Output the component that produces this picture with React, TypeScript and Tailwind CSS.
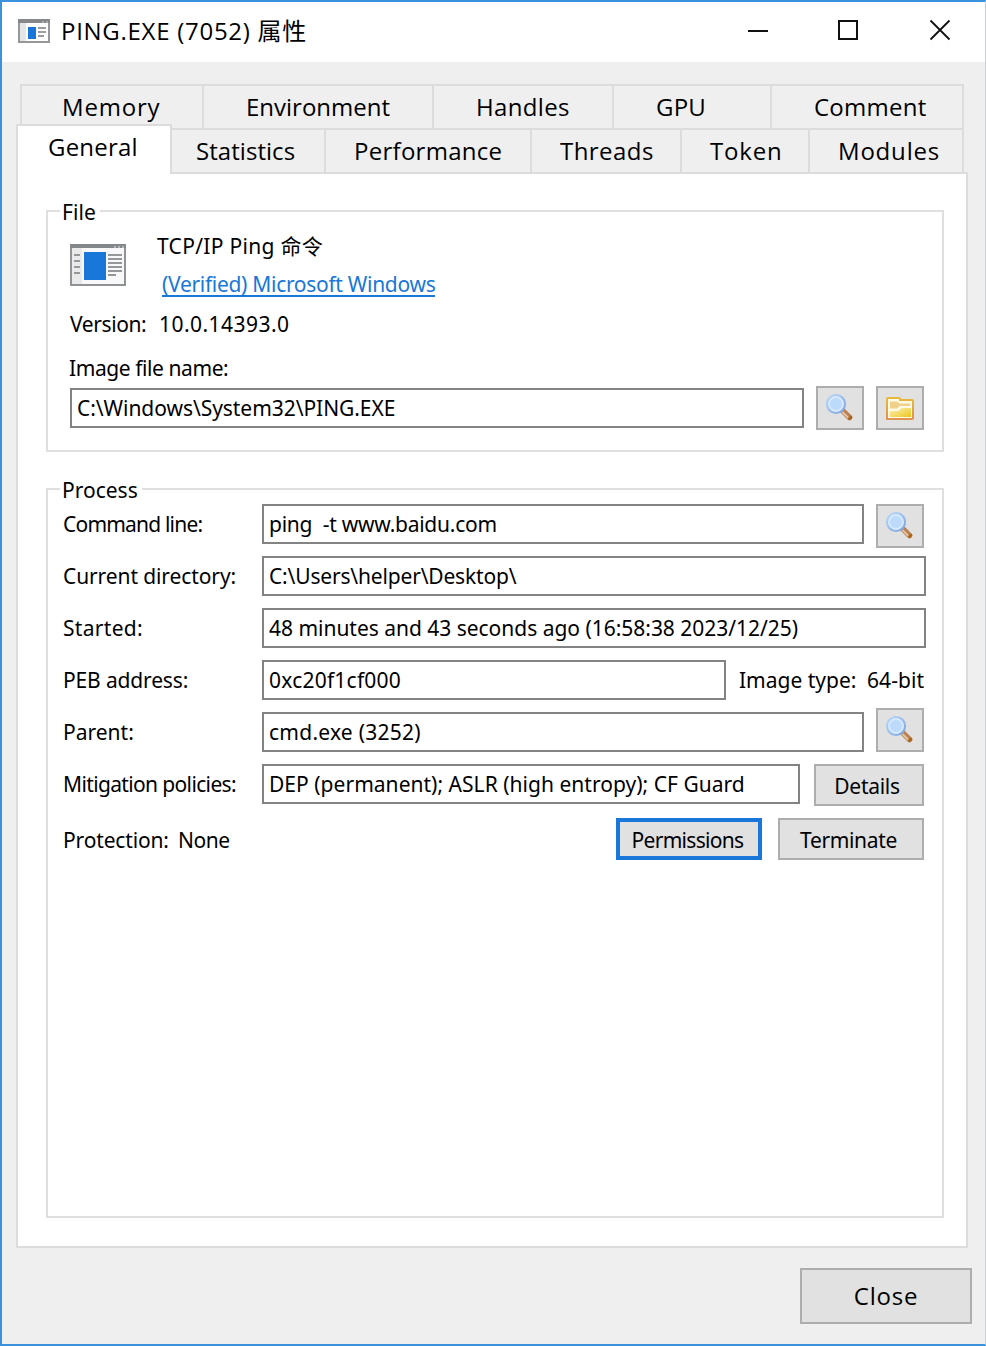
import React from 'react';

function Tab({ className, children }: { className: string; children: string }) {
  return (
    <div className={`flex h-full shrink-0 items-center border-r-2 border-[#dcdcdc] text-[24px] leading-none whitespace-pre ${className}`}>
      {children}
    </div>
  );
}

function Label({ className, children }: { className: string; children: string }) {
  return <span className={`shrink-0 whitespace-pre leading-none ${className}`}>{children}</span>;
}

function Field({ className, children }: { className: string; children: string }) {
  return (
    <div className={`flex h-[40px] shrink-0 items-center border-2 border-[#838383] bg-white pl-[5px] leading-none whitespace-pre ${className}`}>
      {children}
    </div>
  );
}

function Button({ className, children }: { className: string; children: React.ReactNode }) {
  return (
    <button className={`flex shrink-0 items-center justify-center bg-[#e1e1e1] leading-none whitespace-pre ${className}`}>
      {children}
    </button>
  );
}

function Magnifier() {
  return (
    <svg width="30" height="30" viewBox="0 0 30 30" className="-translate-x-px -translate-y-px">
      <defs>
        <linearGradient id="rim" x1="0" y1="0" x2="1" y2="1">
          <stop offset="0" stopColor="#bcd8f6" />
          <stop offset="1" stopColor="#7ba3de" />
        </linearGradient>
      </defs>
      <path d="M19.500 19.500L25.500 25.500" stroke="#b98250" strokeWidth="5.600" strokeLinecap="round" />
      <path d="M19 20.500L24.500 26" stroke="#e3c3a3" strokeWidth="1.800" strokeLinecap="round" />
      <path d="M25.500 26.500L26.800 25.200" stroke="#a9661c" strokeWidth="3" strokeLinecap="round" />
      <circle cx="12" cy="12" r="9" fill="#b9dafa" stroke="url(#rim)" strokeWidth="2.200" />
      <circle cx="12" cy="12" r="7" fill="#bcdbfa" stroke="#d6e8fc" strokeWidth="1.800" />
    </svg>
  );
}

function Folder() {
  return (
    <svg width="30" height="26" viewBox="0 0 30 26">
      <defs>
        <linearGradient id="edge" x1="0" y1="0" x2="0" y2="1">
          <stop offset="0" stopColor="#e8b93c" />
          <stop offset="1" stopColor="#df9350" />
        </linearGradient>
        <linearGradient id="face" x1="0" y1="0" x2="1" y2="1">
          <stop offset="0" stopColor="#fbf3b8" />
          <stop offset="1" stopColor="#edc61c" />
        </linearGradient>
      </defs>
      <path d="M2 24V4Q2 3 3 3H14Q15 3 15 4V5H27Q28 5 28 6V23Q28 24 27 24Z" fill="#fffbe6" stroke="url(#edge)" strokeWidth="2" />
      <path d="M5 6.500H12L14.500 8.500H25V11H14.500L12.500 13.500H5Z" fill="#f0d08a" />
      <path d="M4.500 22V16H13.500L16.500 13H26V22Z" fill="url(#face)" />
    </svg>
  );
}

function SmallAppIcon() {
  return (
    <svg width="32" height="24" viewBox="0 0 32 24" className="-mt-[2px] shrink-0">
      <rect x="1" y="1" width="30" height="22" fill="#fff" stroke="#94989b" strokeWidth="2" />
      <rect x="2" y="4" width="6" height="18" fill="#e4e5e6" />
      <rect x="0" y="0" width="32" height="4" fill="#84888b" />
      <path d="M24 3h2M28 3h2" stroke="#b5b7b8" strokeWidth="1.500" />
      <rect x="10" y="8" width="8" height="12" fill="#1877d9" />
      <path d="M20 9h8M20 13h8M20 17h6" stroke="#9a9ea1" strokeWidth="1.800" />
    </svg>
  );
}

function LargeAppIcon() {
  return (
    <svg width="56" height="42" viewBox="0 0 56 42" className="shrink-0">
      <rect x="1" y="1" width="54" height="40" fill="#f8f8f8" stroke="#8f9396" strokeWidth="2" />
      <rect x="2" y="4" width="10" height="36" fill="#eaeaea" />
      <rect x="0" y="0" width="56" height="4" fill="#84888b" />
      <path d="M44 3h2M48 3h2M52 3h2" stroke="#c5c7c8" strokeWidth="1.500" />
      <path d="M4 11h6M4 17h6M4 23h6M4 29h6" stroke="#94989b" strokeWidth="2" />
      <rect x="14" y="8" width="22" height="28" fill="#1877d9" />
      <path d="M38 11h14M38 15h14M38 19h14M38 23h14M38 27h14M38 31h8" stroke="#94989b" strokeWidth="2" />
    </svg>
  );
}

const iconButton = 'h-[44px] w-[48px] border-2 border-[#adadad]';
const labelColumn = 'w-[199px]';

export default function App() {
  return (
    <div className="flex h-[1346px] w-[986px] flex-col border-y-2 border-r border-l-2 border-y-[#3c91dc] border-r-[#b9d3ec] border-l-[#3c91dc] bg-[#efefef] font-['Open_Sans','Noto_Sans_CJK_SC',sans-serif] text-black">
      <header className="flex h-[60px] shrink-0 items-center bg-white pl-[16px] pr-[34px]">
        <SmallAppIcon />
        <h1 className="-mt-[2px] ml-[11px] grow text-[24px] leading-none tracking-[0.72px] whitespace-pre">PING.EXE (7052) 属性</h1>
        <svg width="204" height="22" viewBox="0 0 204 22" className="-mt-[4px] shrink-0" fill="none" stroke="#111" strokeWidth="2">
          <path d="M1 12h20" />
          <rect x="92" y="2" width="18" height="18" />
          <path d="M183.500 1.500l19 19M202.500 1.500l-19 19" strokeWidth="1.800" />
        </svg>
      </header>

      <nav className="mt-[22px] ml-[18px] flex h-[44px] w-[944px] shrink-0 border-t-2 border-l-2 border-[#dcdcdc]">
        <Tab className="w-[182px] pl-[40px] tracking-[0.8px]">Memory</Tab>
        <Tab className="w-[230px] pl-[42px] tracking-[0px]">Environment</Tab>
        <Tab className="w-[180px] pl-[42px] tracking-[0.35px]">Handles</Tab>
        <Tab className="w-[158px] pl-[42px] tracking-[0.2px]">GPU</Tab>
        <Tab className="w-[192px] pl-[42px] tracking-[0.25px]">Comment</Tab>
      </nav>
      <nav className="ml-[14px] flex h-[44px] w-[948px] shrink-0">
        <div className="relative z-10 -mt-[4px] flex h-[50px] w-[156px] shrink-0 items-center border-2 border-b-0 border-[#dcdcdc] bg-white pb-[7px] pl-[30px] text-[24px] leading-none tracking-[0.2px]">
          General
        </div>
        <div className="flex h-[44px] w-[792px] border-t-2 border-[#dcdcdc]">
          <Tab className="w-[154px] pl-[24px] tracking-[0.05px]">Statistics</Tab>
          <Tab className="w-[206px] pl-[28px] tracking-[0.27px]">Performance</Tab>
          <Tab className="w-[150px] pl-[28px] tracking-[0.45px]">Threads</Tab>
          <Tab className="w-[128px] pl-[28px] tracking-[0.8px]">Token</Tab>
          <Tab className="w-[154px] pl-[28px] tracking-[0.8px]">Modules</Tab>
        </div>
      </nav>

      <main className="ml-[14px] flex h-[1076px] w-[952px] shrink-0 flex-col border-2 border-[#dcdcdc] bg-white px-[28px] pt-[36px] font-['Noto_Sans','Noto_Sans_CJK_SC',sans-serif] text-[21px]">
        <section className="h-[242px] w-[898px] shrink-0 border-2 border-[#dfdfdf]">
          <h2 className="-mt-[12px] ml-[12px] flex h-[24px] w-[40px] items-center bg-white pl-[2px] leading-none tracking-[0.1px]">File</h2>
          <div className="mt-px mb-[7px] ml-[22px] flex h-[80px] items-center">
            <LargeAppIcon />
            <div className="ml-[31px] flex flex-col">
              <Label className="flex h-[38px] items-center tracking-[0.3px]">TCP/IP Ping 命令</Label>
              <a className="ml-[5px] flex h-[38px] items-center text-[#1877d9]">
                <span className="h-[25px] border-b-2 border-[#1877d9] leading-[24px] tracking-[-0.3px] whitespace-pre">(Verified) Microsoft Windows</span>
              </a>
            </div>
          </div>
          <div className="ml-[22px] flex h-[24px] items-center">
            <Label className="w-[89px] tracking-[-0.4px]">Version:</Label>
            <Label className="tracking-[0.46px]">10.0.14393.0</Label>
          </div>
          <div className="mt-[20px] ml-[21px] flex h-[24px] items-center">
            <Label className="tracking-[-0.42px]">Image file name:</Label>
          </div>
          <div className="mt-[6px] ml-[22px] flex h-[44px] items-center gap-[12px]">
            <Field className="w-[734px] tracking-[-0.05px]">{'C:\\Windows\\System32\\PING.EXE'}</Field>
            <Button className={iconButton}><Magnifier /></Button>
            <Button className={iconButton}><Folder /></Button>
          </div>
        </section>

        <section className="mt-[36px] h-[730px] w-[898px] shrink-0 border-2 border-[#dfdfdf]">
          <h2 className="-mt-[12px] ml-[12px] flex h-[24px] w-[82px] items-center bg-white pl-[2px] leading-none tracking-[0px]">Process</h2>
          <div className="mt-[2px] ml-[15px] flex flex-col gap-[12px]">
            <div className="flex h-[40px] items-center">
              <Label className={`${labelColumn} tracking-[-0.8px]`}>Command line:</Label>
              <Field className="w-[602px] tracking-[-0.25px]">ping  -t www.baidu.com</Field>
              <Button className={`${iconButton} mt-[4px] ml-[12px]`}><Magnifier /></Button>
            </div>
            <div className="flex h-[40px] items-center">
              <Label className={`${labelColumn} tracking-[-0.1px]`}>Current directory:</Label>
              <Field className="w-[664px] tracking-[-0.17px]">{'C:\\Users\\helper\\Desktop\\'}</Field>
            </div>
            <div className="flex h-[40px] items-center">
              <Label className={`${labelColumn} tracking-[0.3px]`}>Started:</Label>
              <Field className="w-[664px] tracking-[-0.02px]">48 minutes and 43 seconds ago (16:58:38 2023/12/25)</Field>
            </div>
            <div className="flex h-[40px] items-center">
              <Label className={`${labelColumn} tracking-[-0.15px]`}>PEB address:</Label>
              <Field className="w-[464px] tracking-[0.22px]">0xc20f1cf000</Field>
              <Label className="ml-[13px] w-[128px] tracking-[0px]">Image type:</Label>
              <Label className="tracking-[0.1px]">64-bit</Label>
            </div>
            <div className="flex h-[40px] items-center">
              <Label className={`${labelColumn} tracking-[0px]`}>Parent:</Label>
              <Field className="w-[602px] tracking-[0.25px]">cmd.exe (3252)</Field>
              <Button className={`${iconButton} -mt-[4px] ml-[12px]`}><Magnifier /></Button>
            </div>
            <div className="flex h-[40px] items-center">
              <Label className={`${labelColumn} tracking-[-0.64px]`}>Mitigation policies:</Label>
              <Field className="w-[538px] tracking-[0.03px]">DEP (permanent); ASLR (high entropy); CF Guard</Field>
              <Button className="mt-[2px] ml-[14px] h-[42px] w-[110px] border-2 border-[#adadad] pt-[2px] pr-[4px] tracking-[-0.3px]">Details</Button>
            </div>
            <div className="mt-[2px] flex h-[42px] items-center">
              <Label className="mt-[2px] w-[115px] tracking-[-0.15px]">Protection:</Label>
              <Label className="mt-[2px] w-[438px] tracking-[-0.5px]">None</Label>
              <Button className="h-[42px] w-[146px] border-4 border-[#1877d9] pt-[2px] pr-[3px] tracking-[-0.7px]">Permissions</Button>
              <Button className="ml-[16px] h-[42px] w-[146px] border-2 border-[#adadad] pt-[2px] pr-[5px] tracking-[-0.35px]">Terminate</Button>
            </div>
          </div>
        </section>
      </main>

      <footer className="mt-[20px] flex justify-end pr-[13px]">
        <Button className="h-[56px] w-[172px] border-2 border-[#adadad] pb-px text-[24px] tracking-[0.8px]">Close</Button>
      </footer>
    </div>
  );
}
